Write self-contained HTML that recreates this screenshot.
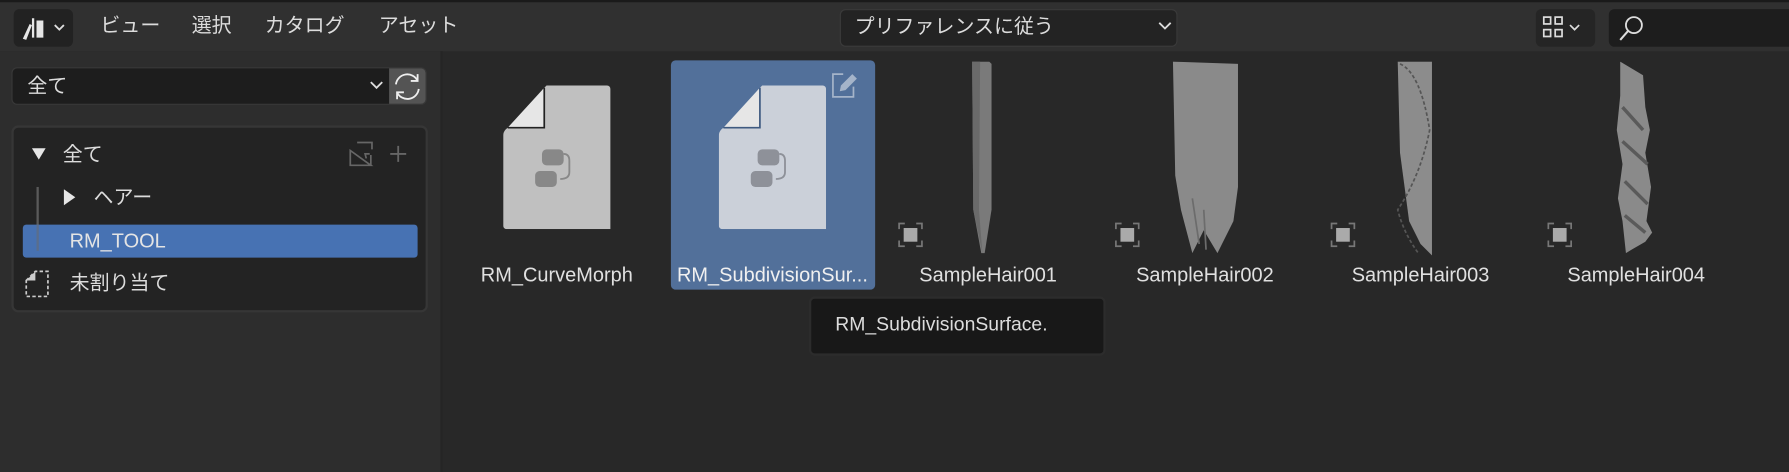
<!DOCTYPE html>
<html><head><meta charset="utf-8"><style>
*{margin:0;padding:0;box-sizing:border-box}
html,body{width:1789px;height:472px;overflow:hidden;background:#282828}
#f{position:absolute;left:0;top:0;width:1568px;height:414px;transform:scale(1.141,1.1401);transform-origin:0 0;background:#282828;font-family:"Liberation Sans","Noto Sans CJK JP",sans-serif;color:#dcdcdc}
.a{position:absolute}
.t{position:absolute;font-size:17.5px;white-space:nowrap;line-height:20px}
.lbl{position:absolute;font-size:17.5px;color:#e0e0e0;white-space:nowrap;transform:translateX(-50%);line-height:20px}
.fi{position:absolute;width:94px;height:126px}
.obj{position:absolute;width:22px;height:22px}
</style></head><body><div id="f">
<div class="a" style="left:0;top:0;width:1568px;height:45px;background:#303030;border-top:2px solid #1a1a1a"></div>
<div class="a" style="left:0;top:45px;width:388px;height:369px;background:#2d2d2d;border-right:2px solid #252525"></div>
<div class="a" style="left:12px;top:8px;width:52px;height:33px;background:#222;border-radius:5px"></div>
<svg class="a" style="left:18px;top:13px" width="42" height="24" viewBox="0 0 42 24"><path d="M2 21 L8 8 L10 9 L5 22Z M10 20 V3 H12 V20Z M14 20 V5 H20 V20Z" fill="#e6e6e6"/><path d="M30 9 l4 4 l4 -4" stroke="#ddd" stroke-width="1.6" fill="none"/></svg>
<div class="t" style="left:88px;top:12px">ビュー</div>
<div class="t" style="left:168px;top:12px">選択</div>
<div class="t" style="left:232px;top:12px">カタログ</div>
<div class="t" style="left:332px;top:12px">アセット</div>
<div class="a" style="left:736px;top:8px;width:296px;height:33px;background:#232323;border-radius:5px;border:1px solid #3a3a3a"></div>
<div class="t" style="left:749px;top:13px">プリファレンスに従う</div>
<svg class="a" style="left:1015px;top:18px" width="12" height="10"><path d="M1 2 l5 5 l5 -5" stroke="#ddd" stroke-width="1.6" fill="none"/></svg>
<div class="a" style="left:1346px;top:8px;width:52px;height:33px;background:#252525;border-radius:5px"></div>
<svg class="a" style="left:1350px;top:12px" width="46" height="26"><g fill="none" stroke="#ddd" stroke-width="1.5"><rect x="3" y="3" width="6" height="6"/><rect x="13" y="3" width="6" height="6"/><rect x="3" y="14" width="6" height="6"/><rect x="13" y="14" width="6" height="6"/><path d="M26 10 l4 4 l4 -4"/></g></svg>
<div class="a" style="left:1410px;top:8px;width:170px;height:33px;background:#1d1d1d;border-radius:5px"></div>
<svg class="a" style="left:1416px;top:11px" width="28" height="28"><circle cx="16" cy="11" r="7" stroke="#ddd" stroke-width="1.6" fill="none"/><path d="M11 16 L4 24" stroke="#ddd" stroke-width="1.8"/></svg>
<div class="a" style="left:10px;top:59px;width:364px;height:33px;background:#1d1d1d;border-radius:5px;border:1px solid #383838"></div>
<div class="t" style="left:24px;top:65px">全て</div>
<svg class="a" style="left:324px;top:70px" width="12" height="10"><path d="M1 2 l5 5 l5 -5" stroke="#ddd" stroke-width="1.6" fill="none"/></svg>
<div class="a" style="left:341px;top:60px;width:32px;height:31px;background:#545454;border-radius:0 4px 4px 0"></div>
<svg class="a" style="left:343px;top:62px" width="28" height="28" viewBox="0 0 28 28"><g fill="none" stroke="#eee" stroke-width="1.6"><path d="M4 12 A10 10 0 0 1 23 9"/><path d="M23 3 V9 H17"/><path d="M24 16 A10 10 0 0 1 5 19"/><path d="M5 25 V19 H11"/></g></svg>
<div class="a" style="left:10px;top:110px;width:365px;height:164px;background:#232323;border:2px solid #363636;border-radius:6px"></div>
<svg class="a" style="left:27px;top:129px" width="14" height="12"><path d="M1 1 H13 L7 11Z" fill="#e6e6e6"/></svg>
<div class="t" style="left:55px;top:125px">全て</div>
<svg class="a" style="left:303px;top:122px" width="56" height="26"><path d="M10 3 H23 V9 M22 23 H4 V10 Z" fill="none" stroke="#666" stroke-width="1.5"/><path d="M22 23 V14 M18 17 l-1 -4 h4" fill="none" stroke="#666" stroke-width="1.5"/><path d="M46 6 V20 M39 13 H53" stroke="#666" stroke-width="1.6"/></svg>
<div class="a" style="left:32px;top:164px;width:2px;height:57px;background:#5a5a5a"></div>
<svg class="a" style="left:55px;top:165px" width="12" height="16"><path d="M1 1 V15 L11 8Z" fill="#e6e6e6"/></svg>
<div class="t" style="left:82px;top:163px">ヘアー</div>
<div class="a" style="left:20px;top:197px;width:346px;height:29px;background:#4772b3;border-radius:3px"></div>
<div class="a" style="left:32px;top:197px;width:2px;height:23px;background:#5a6e8c"></div>
<div class="t" style="left:61px;top:201px;color:#e4e4e4">RM_TOOL</div>
<svg class="a" style="left:22px;top:236px" width="24" height="26"><path d="M1 10 L9 2 H20 V24 H1Z" fill="none" stroke="#ccc" stroke-width="1.5" stroke-dasharray="3 2"/><path d="M1 10 L9 2 V10Z" fill="#ccc"/></svg>
<div class="t" style="left:61px;top:238px">未割り当て</div>
<div class="a" style="left:588px;top:53px;width:179px;height:201px;background:#52709a;border-radius:4px"></div>
<svg class="fi" style="left:441px;top:75px" viewBox="0 0 94 126"><path d="M38 0 H91 a3 3 0 0 1 3 3 V126 H3 a3 3 0 0 1 -3 -3 V44 A8 8 0 0 1 8 36 H34 V4Z" fill="#c0c0c0"/><path d="M36 2 V37 H4Z" fill="#e6e6e6"/><path d="M36 2 V37 H4" fill="none" stroke="#222" stroke-width="1.5"/><rect x="34" y="56" width="19" height="14" rx="4" fill="#888"/><rect x="28" y="75" width="19" height="14" rx="4" fill="#888"/><path d="M53 60 q5 0 5 6 v10 q0 6 -8 6" fill="none" stroke="#888" stroke-width="1.6"/></svg>
<svg class="fi" style="left:630px;top:75px" viewBox="0 0 94 126"><path d="M38 0 H91 a3 3 0 0 1 3 3 V126 H3 a3 3 0 0 1 -3 -3 V44 A8 8 0 0 1 8 36 H34 V4Z" fill="#cbd0d9"/><path d="M36 2 V37 H4Z" fill="#e6e6e6"/><path d="M36 2 V37 H4" fill="none" stroke="#3f5a80" stroke-width="1.5"/><rect x="34" y="56" width="19" height="14" rx="4" fill="#8e9199"/><rect x="28" y="75" width="19" height="14" rx="4" fill="#8e9199"/><path d="M53 60 q5 0 5 6 v10 q0 6 -8 6" fill="none" stroke="#8e9199" stroke-width="1.6"/></svg>
<svg class="a" style="left:727px;top:62px" width="26" height="26"><path d="M12 3 H3 V23 H21 V14" fill="none" stroke="#a5b4c9" stroke-width="1.5"/><path d="M9 18 L10 13 L20 3 L24 7 L14 17Z" fill="#a5b4c9"/></svg>
<div class="lbl" style="left:488px;top:231px">RM_CurveMorph</div>
<div class="lbl" style="left:677px;top:231px;color:#f0f0f0">RM_SubdivisionSur...</div>
<svg class="obj" style="left:787px;top:195px" viewBox="0 0 22 22"><path d="M1 6V1H6M16 1H21V6M21 16V21H16M6 21H1V16" fill="none" stroke="#777" stroke-width="1.5"/><rect x="5" y="5" width="12" height="12" fill="#aaa"/></svg>
<svg class="obj" style="left:977px;top:195px" viewBox="0 0 22 22"><path d="M1 6V1H6M16 1H21V6M21 16V21H16M6 21H1V16" fill="none" stroke="#777" stroke-width="1.5"/><rect x="5" y="5" width="12" height="12" fill="#aaa"/></svg>
<svg class="obj" style="left:1166px;top:195px" viewBox="0 0 22 22"><path d="M1 6V1H6M16 1H21V6M21 16V21H16M6 21H1V16" fill="none" stroke="#777" stroke-width="1.5"/><rect x="5" y="5" width="12" height="12" fill="#aaa"/></svg>
<svg class="obj" style="left:1356px;top:195px" viewBox="0 0 22 22"><path d="M1 6V1H6M16 1H21V6M21 16V21H16M6 21H1V16" fill="none" stroke="#777" stroke-width="1.5"/><rect x="5" y="5" width="12" height="12" fill="#aaa"/></svg>
<svg class="a" style="left:845px;top:54px" width="30" height="170"><path d="M7 0 H22 L24 2 V130 L18 168 L15 168 L8 130Z" fill="#7a7a7a"/><path d="M7 0 H14 L13 130 L16 168 L8 130Z" fill="#6a6a6a"/></svg>
<svg class="a" style="left:1025px;top:54px" width="65" height="172"><path d="M3 0 L60 2 V110 L56 140 L42 168 L30 148 L20 168 L10 130 L5 100Z" fill="#8a8a8a"/><path d="M30 130 L32 165 M20 120 L26 160" stroke="#6c6c6c" stroke-width="1.5"/></svg>
<svg class="a" style="left:1215px;top:54px" width="55" height="172"><path d="M10 0 H40 V170 L30 160 L20 140 L12 80Z" fill="#8c8c8c"/><path d="M12 2 Q30 10 38 60 Q30 100 10 130 Q15 150 28 168" fill="none" stroke="#555" stroke-width="1.5" stroke-dasharray="3 2"/></svg>
<svg class="a" style="left:1410px;top:54px" width="50" height="172"><path d="M10 0 L30 12 L32 40 L36 60 L32 80 L37 110 L33 140 L38 150 L32 158 L20 165 L15 168 L12 140 L8 120 L12 90 L7 60 L10 30Z" fill="#8a8a8a"/><path d="M12 40 L30 60 M12 70 L34 90 M14 105 L34 125 M14 135 L32 150" stroke="#5a5a5a" stroke-width="3"/></svg>
<div class="lbl" style="left:866px;top:231px">SampleHair001</div>
<div class="lbl" style="left:1056px;top:231px">SampleHair002</div>
<div class="lbl" style="left:1245px;top:231px">SampleHair003</div>
<div class="lbl" style="left:1434px;top:231px">SampleHair004</div>
<div class="a" style="left:709px;top:260px;width:260px;height:52px;background:#181818;border:2px solid #2c2c2c;border-radius:5px"></div>
<div class="t" style="left:732px;top:275px;font-size:17px">RM_SubdivisionSurface.</div>
</div></body></html>
